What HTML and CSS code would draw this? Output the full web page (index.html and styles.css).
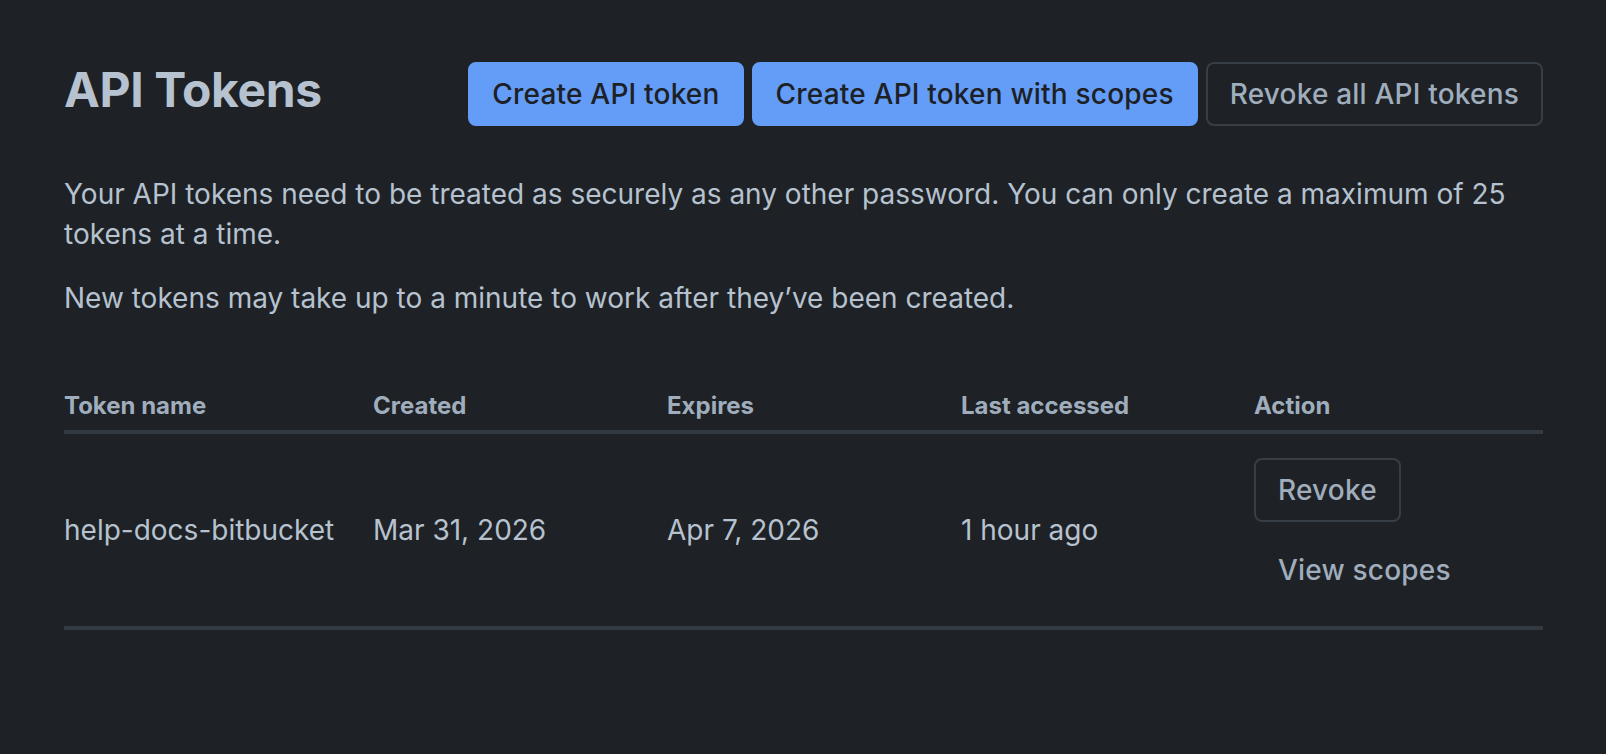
FILE: index.html
```html
<!DOCTYPE html>
<html lang="en">
<head>
<meta charset="utf-8">
<title>API Tokens</title>
<link rel="stylesheet" href="styles.css">
</head>
<body>
<main class="page">
  <header class="page-header">
    <h1 class="title">API Tokens</h1>
    <div class="actions">
      <button class="btn btn-primary">Create API token</button>
      <button class="btn btn-primary">Create API token with scopes</button>
      <button class="btn btn-default">Revoke all API tokens</button>
    </div>
  </header>
  <p class="desc">Your API tokens need to be treated as securely as any other password. You can only create a maximum of 25 tokens at a time.</p>
  <p class="desc desc-second">New tokens may take up to a minute to work after they’ve been created.</p>
  <table class="tokens">
    <colgroup>
      <col class="col-name">
      <col class="col-created">
      <col class="col-expires">
      <col class="col-accessed">
      <col class="col-action">
    </colgroup>
    <thead>
      <tr>
        <th>Token name</th>
        <th>Created</th>
        <th>Expires</th>
        <th>Last accessed</th>
        <th>Action</th>
      </tr>
    </thead>
    <tbody>
      <tr>
        <td>help-docs-bitbucket</td>
        <td>Mar 31, 2026</td>
        <td>Apr 7, 2026</td>
        <td>1 hour ago</td>
        <td>
          <div class="row-actions">
            <button class="btn btn-default">Revoke</button>
            <button class="btn btn-subtle">View scopes</button>
          </div>
        </td>
      </tr>
    </tbody>
  </table>
</main>
</body>
</html>
```
FILE: styles.css
```css
html, body {
  margin: 0;
  padding: 0;
  background: #1e2125;
}

body {
  font-family: Inter, "Noto Sans", "Liberation Sans", sans-serif;
  color: #b6c2cf;
}

.page {
  padding: 62px 63px 0 64px;
}

.page-header {
  display: flex;
  align-items: flex-start;
  justify-content: space-between;
}

.title {
  margin: 1px 0 0;
  font-size: 48px;
  line-height: 54px;
  font-weight: 700;
  letter-spacing: -0.4px;
  color: #b6c2cf;
}

.actions {
  display: flex;
  gap: 8px;
}

.btn {
  height: 64px;
  padding: 0 22px;
  border: 2px solid transparent;
  border-radius: 8px;
  font-family: inherit;
  font-size: 28px;
  font-weight: 500;
  line-height: 1;
  letter-spacing: 0.2px;
  background: transparent;
  color: #9fadbc;
  white-space: nowrap;
  cursor: pointer;
}

.btn-primary {
  background: #649df7;
  border-color: #649df7;
  color: #1d2125;
}

.btn-default {
  border-color: #383e45;
}

.btn-subtle {
  border-color: transparent;
}

.desc {
  margin: 48px 0 0;
  font-size: 28px;
  line-height: 40px;
  color: #b6c2cf;
}

.desc-second {
  margin-top: 24px;
}

.tokens {
  width: 100%;
  margin-top: 64px;
  border-collapse: collapse;
  table-layout: fixed;
}

.col-name { width: 309px; }
.col-created { width: 294px; }
.col-expires { width: 294px; }
.col-accessed { width: 293px; }

.tokens th {
  padding: 8px 0 8px;
  text-align: left;
  font-size: 24px;
  line-height: 32px;
  font-weight: 700;
  color: #9fadbc;
  border-bottom: 4px solid #333a42;
}

.tokens td {
  padding: 24px 0;
  font-size: 28px;
  line-height: 40px;
  color: #b6c2cf;
  vertical-align: middle;
  border-bottom: 4px solid #333a42;
}

.row-actions {
  display: flex;
  flex-direction: column;
  align-items: flex-start;
  gap: 16px;
}
```
